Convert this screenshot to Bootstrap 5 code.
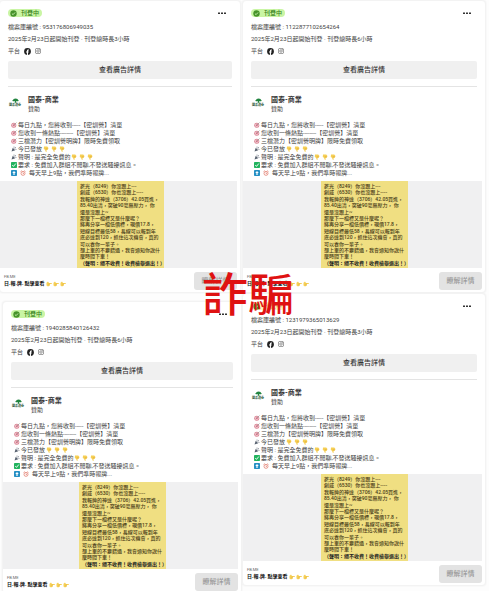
<!DOCTYPE html>
<html lang="zh-Hant">
<head>
<meta charset="utf-8">
<meta name="viewport" content="width=device-width, initial-scale=1">
<title>廣告檔案庫</title>
<link href="https://cdn.jsdelivr.net/npm/bootstrap@5.3.0/dist/css/bootstrap.min.css" rel="stylesheet">
<style>
body{background:#fdfdfd;color:#444;font:6px/8px Roboto,"Noto Sans CJK TC",sans-serif}
.board{display:grid;grid-template-columns:241fr 244fr;column-gap:1px;padding-right:3px}
.ad{border:1px solid #f3f3f3;border-radius:4px;box-shadow:0 0 2px #eee;background:#fff}
.ad-first{margin-left:-1px}
.ad-lower{margin:8px -1px 0 2px}
.meta{padding:8px 8px 0 8px}
.pill{background:#c9f5a4;color:#35801a;border-radius:4px;height:8px;padding:0 3px 0 2px;font-weight:500}
.pill-pale{background:#fdf3c0;color:#d8b060}
.more{width:14px;height:8px;color:#333}
.line{height:12px;line-height:12px}
.detail{height:18px;font-size:7px;line-height:18px;border-radius:2px;background:#f0f0f0;color:#333;font-weight:500}
.rule{height:1px;margin-top:7px;background:#e4e4e4}
.sponsor{margin-top:9px;height:17px;line-height:8px}
.sponsor b{font-size:7px;line-height:9px;color:#333}
.brand{width:20px;padding-left:1px}
.brand svg{display:block;margin:2px 0 0 3px}
.brand span{display:block;font-size:3px;line-height:4px;font-weight:700;color:#2b5a3a;white-space:nowrap}
.post{padding:8px 0 0 3px}
.post svg{width:6px;height:6px;flex:none}
.post p{height:8px;white-space:nowrap;gap:1px}
.hands{display:flex;gap:2px}
.post .alarm{margin:0 2px}
.media{margin:4px 3px 0 0;padding-left:4px;background:#f0f0f1;height:87px}
.note{width:87px;background:#f0df82;color:#493c18;padding:2px 0 2px 3px;font-size:5px;line-height:6px;font-weight:500;white-space:nowrap}
.note b{color:#222}
.foot{padding:4px 3px 3px 4px;height:24px}
.foot small{font-size:4px;line-height:6px;color:#666;display:block;margin-top:2px}
.foot b{font-size:5px;line-height:7px;color:#111}
.foot svg{width:6px;height:6px;margin-left:1px}
.cta{width:43px;height:18px;font-size:7px;line-height:18px;background:#e3e3e3;color:#999;border-radius:3px;font-weight:500}
.stamp{left:202px;top:259px;font:500 46px/64px "Noto Sans CJK TC",sans-serif;color:#df1212}
</style>
<script src="https://cdn.jsdelivr.net/npm/bootstrap@5.3.0/dist/js/bootstrap.bundle.min.js"></script>
</head>
<body>
<svg class="d-none" aria-hidden="true">
<symbol id="target" viewBox="0 0 12 12"><circle cx="5.5" cy="6.5" r="5" fill="#d98090"/><circle cx="5.5" cy="6.5" r="3.5" fill="#f3d4da"/><circle cx="5.5" cy="6.5" r="2.2" fill="#d9758a"/><path d="M5.5 6.5 11 1" stroke="#888" stroke-width="1.2"/></symbol>
<symbol id="party" viewBox="0 0 12 12"><path d="M1 11 3.5 3.5 8.5 8.5Z" fill="#56606f"/><path d="M5 4Q7 3 6 1M8 7Q10 5 11 7M7 5 10 2" fill="none" stroke="#6a7280" stroke-width="1.2"/></symbol>
<symbol id="down" viewBox="0 0 12 12"><path d="M2 1H8.500L11 4 9.500 7.500 7 8 7.500 11.500H5.500L4 7.500 1.500 6Z" fill="#f6cf55"/><path d="M6.500 4v3M8.500 4v3" stroke="#d49d2b" stroke-width=".7"/></symbol>
<symbol id="right" viewBox="0 0 12 12"><path d="M1 3.500 4 1 6 4H11.500V6H7.500V9L4 11 1 9Z" fill="#f6cf55"/><path d="M5 6h3M5 8h2.500" stroke="#d49d2b" stroke-width=".7"/></symbol>
<symbol id="check" viewBox="0 0 12 12"><rect width="12" height="12" rx="1.500" fill="#22b35e"/><path d="M2.500 6 5 8.800 9.700 3" fill="none" stroke="#fff" stroke-width="1.800"/></symbol>
<symbol id="up" viewBox="0 0 12 12"><rect width="12" height="12" rx="1.500" fill="#258fc4"/><path d="M6 2 9.500 6H7.200V10H4.800V6H2.500Z" fill="#fff"/></symbol>
<symbol id="clock" viewBox="0 0 12 12"><circle cx="6" cy="6.700" r="4" fill="#fff" stroke="#e2786a" stroke-width="1.500"/><path d="M1 3 3.500 1M11 3 8.500 1M6 4.500V7H8" fill="none" stroke="#e2786a" stroke-width="1.300"/></symbol>
<symbol id="fb" viewBox="0 0 12 12"><circle cx="6" cy="6" r="5.800" fill="#222"/><path d="M5 12V7.700H3.500V6H5V4.800Q5 2.600 7.100 2.600H8.400V4.200H7.600Q6.800 4.200 6.800 5V6H8.300L8 7.700H6.800V12Z" fill="#fff"/></symbol>
<symbol id="ig" viewBox="0 0 12 12"><rect x=".8" y=".8" width="10.400" height="10.400" rx="3" fill="none" stroke="#555" stroke-width="1.200"/><circle cx="6" cy="6" r="2.500" fill="none" stroke="#555" stroke-width="1.200"/><circle cx="9" cy="3" r=".8" fill="#555"/></symbol>
<symbol id="ok" viewBox="0 0 12 12"><circle cx="6" cy="6" r="5.500" fill="#46932a"/><path d="M3.300 6.200 5.300 8 8.700 4.200" fill="none" stroke="#d8f8bd" stroke-width="1.400"/></symbol>
<symbol id="tree" viewBox="0 0 14 9"><path d="M1 5.500Q0 3.500 2.500 2.900Q3 .7 5.500 1.100Q7-.3 9 1.100Q11.500.9 11.800 3Q14 3.500 13 5.500Q11 6.500 8 5.700L9 9H5L6 5.700Q3 6.500 1 5.500Z" fill="#21843f"/></symbol>
<symbol id="dots" viewBox="0 0 14 8"><path d="M4 3.500h2v1.500H4zM7 3.500h2v1.500H7zM10 3.500h2v1.500H10z" fill="#333"/></symbol>
</svg>
<main class="position-relative overflow-hidden vh-100">
<div class="board" id="board"></div>
<div class="stamp position-absolute">詐騙</div>
</main>
<template id="ad-template">
<article class="ad">
<div class="meta">
<div class="d-flex justify-content-between"><span class="pill d-flex align-items-center gap-1"><svg width="7" height="7" aria-hidden="true"><use href="#ok"/></svg>刊登中</span><button class="more btn border-0 p-0 d-flex me-1" aria-label="更多"><svg width="14" height="8"><use href="#dots"/></svg></button></div>
<div class="line mt-1">檔案庫編號 : <span data-id></span></div>
<div class="line">2025年2月23日起開始刊登 · 刊登總時長<span data-hours></span>小時</div>
<div class="line d-flex align-items-center">平台<svg class="ms-1" width="7" height="7" role="img" aria-label="Facebook"><use href="#fb"/></svg><svg class="ms-1" width="6" height="6" role="img" aria-label="Instagram"><use href="#ig"/></svg></div>
<button class="detail btn border-0 p-0 w-100 d-block mt-1">查看廣告詳情</button>
<div class="rule"></div>
<div class="sponsor d-flex"><div class="brand"><svg width="7" height="5" aria-hidden="true"><use href="#tree"/></svg><span>國泰證券</span></div><div><b class="d-block">國泰-商業</b>贊助</div></div>
<div class="post">
<p class="m-0 d-flex align-items-center"><svg><use href="#target"/></svg><span>每日九點，您將收到-----【密訓營】清單</span></p>
<p class="m-0 d-flex align-items-center"><svg><use href="#target"/></svg><span>您收到一條熱點--------【密訓營】清單</span></p>
<p class="m-0 d-flex align-items-center"><svg><use href="#target"/></svg><span>三檔潛力【密訓營明牌】限時免費領取</span></p>
<p class="m-0 d-flex align-items-center"><svg><use href="#party"/></svg><span>今已發放</span><span class="hands"></span></p>
<p class="m-0 d-flex align-items-center"><svg><use href="#party"/></svg><span>聲明 : 是完全免費的</span><span class="hands"></span></p>
<p class="m-0 d-flex align-items-center"><svg><use href="#check"/></svg><span>要求 : 免費加入群組不閒聊,不發送騷擾訊息。</span></p>
<p class="m-0 d-flex align-items-center"><svg><use href="#up"/></svg><svg class="alarm"><use href="#clock"/></svg><span>每天早上9點，我們準時報牌...</span></p>
</div>
</div>
<div class="media d-flex justify-content-center"><div class="note d-flex flex-column justify-content-between">
<span>菱光（8249）你沒跟上---</span><span>創威（6530）你也沒跟上----</span><span>我報牌的神達（3706）42.05買進，</span><span>85.40出清，突破90毫無壓力， 你</span><span>還是沒跟上~</span><span>那麼下一檔標又是什麼呢？</span><span>將再分享一檔低價標，現價17.8，</span><span>短線目標最低58，長線可以報到年</span><span>底必達到120，抓住這次機會，真的</span><span>可以養你一輩子。</span><span>想上車的不要錯過，我會通知你說什</span><span>麼時間下車！</span><b>（聲明：絕不收費！收費檢舉退出！）</b>
</div></div>
<div class="foot d-flex justify-content-between align-items-start"><div><small>FB.ME</small><div class="d-flex align-items-center"><b>日.報.牌. 點擊查看</b><svg><use href="#right"/></svg><svg><use href="#right"/></svg><svg><use href="#right"/></svg></div></div><button class="cta btn border-0 p-0">瞭解詳情</button></div>
</article>
</template>
<script>
const ads = [['953176806949035',3,'ad-first'],['1122877102654264',6],['1940285840126432',6,'ad-lower'],['1231979365013629',3]];
const board = document.getElementById('board');
const columns = [0,1].map(() => board.appendChild(document.createElement('div')));
ads.forEach(([id,hours,place],i) => {
  const ad = document.getElementById('ad-template').content.cloneNode(true);
  ad.querySelector('[data-id]').textContent = id;
  ad.querySelector('[data-hours]').textContent = hours;
  ad.querySelectorAll('.hands').forEach(n => n.innerHTML = '<svg><use href="#down"/></svg>'.repeat(3));
  if (place) ad.querySelector('.ad').classList.add(place);
  if (i === 3) ad.querySelector('.pill').classList.add('pill-pale');
  columns[i % 2].append(ad);
});
</script>
</body>
</html>
